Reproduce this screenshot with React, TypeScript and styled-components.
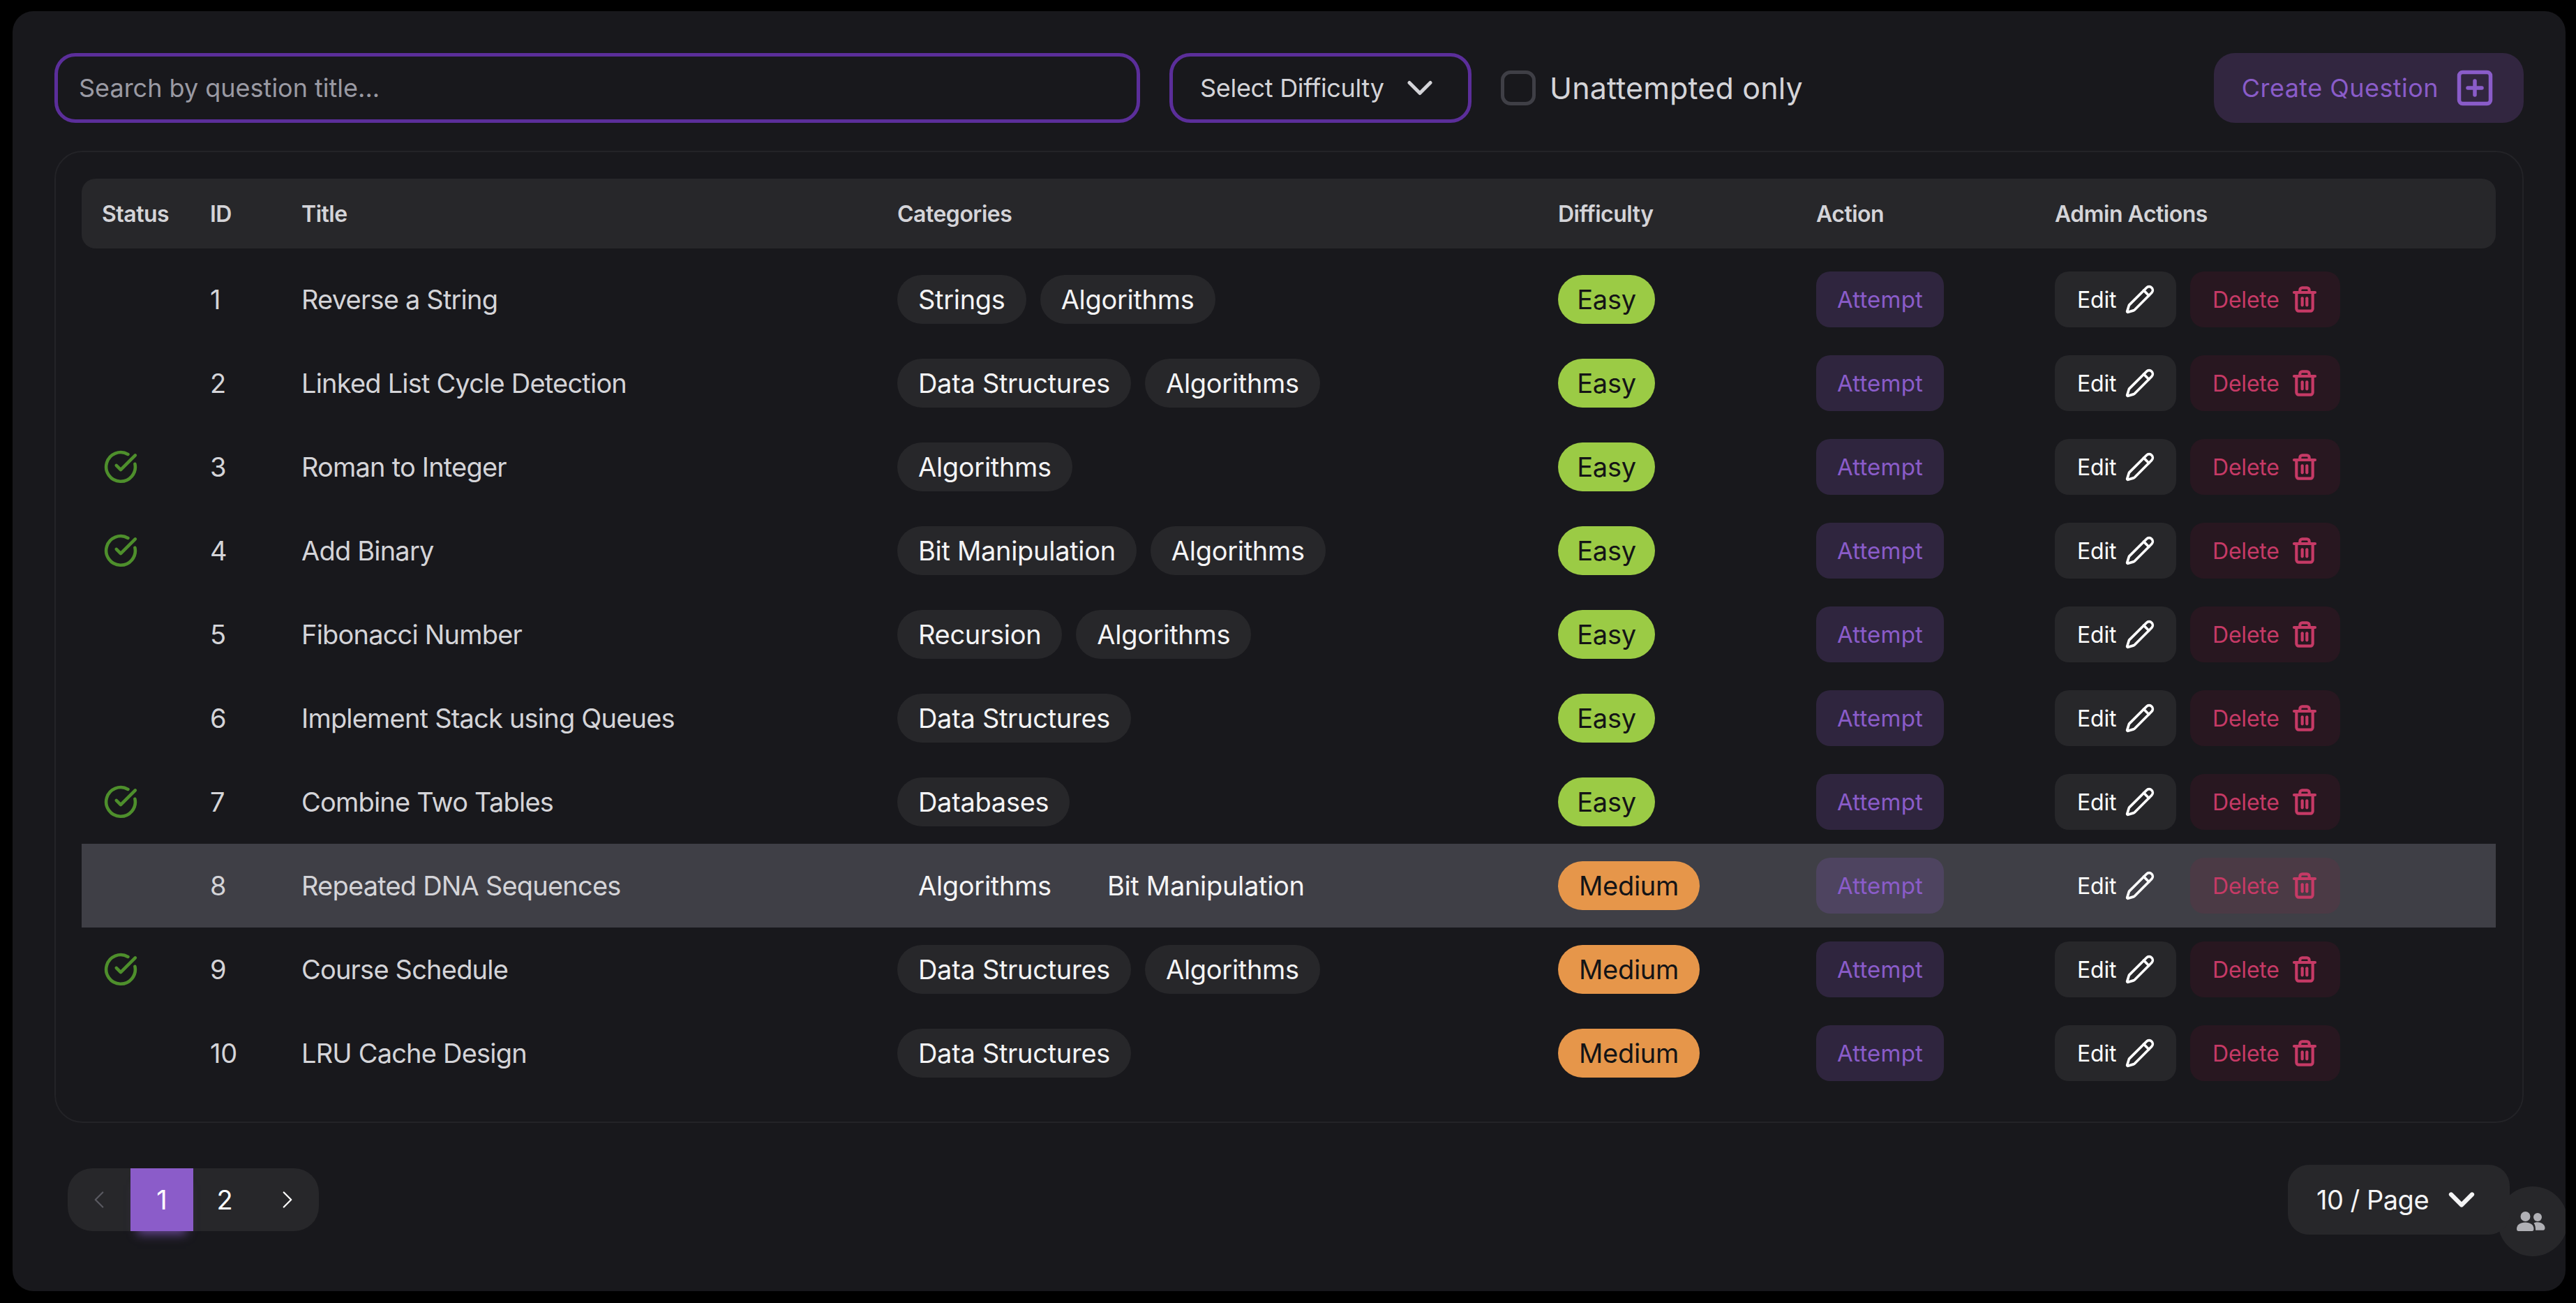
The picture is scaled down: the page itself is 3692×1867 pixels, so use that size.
import styled, { createGlobalStyle } from "styled-components";
import { ChevronDown, ChevronLeft, ChevronRight, CircleCheckBig, Pencil, SquarePlus, Trash2 } from "lucide-react";

const GlobalStyle = createGlobalStyle`
  html, body {
    margin: 0;
    padding: 0;
    background: #000;
    font-family: "Inter", "Noto Sans", sans-serif;
  }
  * { box-sizing: border-box; }
`;

const Page = styled.div`
  width: 3692px;
  height: 1867px;
  padding: 16px 15px 17px 18px;
`;

const Panel = styled.div`
  position: relative;
  height: 100%;
  padding: 60px 60px 0;
  background: #18181c;
  border-radius: 30px;
  overflow: hidden;
`;

const Toolbar = styled.div`
  display: flex;
  align-items: center;
  height: 100px;
`;

const SearchBox = styled.div`
  display: flex;
  align-items: center;
  width: 1556px;
  height: 100px;
  padding: 0 30px;
  border: 5px solid #5b2e9a;
  border-radius: 30px;
  font-size: 36px;
  letter-spacing: 0;
  color: #9a9aa3;
`;

const DifficultySelect = styled.div`
  display: flex;
  align-items: center;
  justify-content: space-between;
  width: 433px;
  height: 100px;
  margin-left: 42px;
  padding: 0 39px;
  border: 5px solid #5b2e9a;
  border-radius: 30px;
  font-size: 36px;
  letter-spacing: -0.3px;
  color: #d4d4d8;
`;

const CheckBox = styled.div`
  width: 50px;
  height: 50px;
  margin-left: 42px;
  border: 5px solid #3f3f46;
  border-radius: 14px;
`;

const CheckLabel = styled.div`
  margin-left: 20px;
  font-size: 43px;
  letter-spacing: 0.15px;
  color: #d4d4d8;
`;

const CreateButton = styled.div`
  display: flex;
  align-items: center;
  gap: 22px;
  height: 100px;
  margin-left: auto;
  padding: 0 40px;
  background: #322640;
  border-radius: 30px;
  font-size: 36px;
  letter-spacing: 0.45px;
  color: #8a5cc9;
`;

const TableCard = styled.div`
  height: 1393px;
  margin-top: 40px;
  padding: 38px 38px 38px 37px;
  border: 2px solid #232327;
  border-radius: 40px;
`;

const columns = "155px 131px 854px 947px 370px 342px 1fr";

const HeaderRow = styled.div`
  display: grid;
  grid-template-columns: ${columns};
  align-items: center;
  height: 100px;
  margin-bottom: 13px;
  padding-left: 29px;
  background: #27272a;
  border-radius: 20px;
  font-size: 32px;
  font-weight: 600;
  letter-spacing: -0.5px;
  color: #d4d4d8;
`;

const Row = styled.div<{ $hover?: boolean }>`
  display: grid;
  grid-template-columns: ${columns};
  align-items: center;
  height: 120px;
  padding-left: 29px;
  background: ${(p) => (p.$hover ? "#3f3f46" : "transparent")};
  font-size: 38px;
  letter-spacing: -0.3px;
  color: #d4d4d8;
`;

const StatusCell = styled.div`
  display: flex;
  align-items: center;
  padding-left: 2px;
  color: #4e8f2c;
`;

const TitleCell = styled.div`
  letter-spacing: -0.8px;
`;

const Chips = styled.div`
  display: flex;
  gap: 20px;
`;

const Chip = styled.div<{ $hover?: boolean }>`
  display: flex;
  align-items: center;
  height: 70px;
  padding: 0 30px;
  background: ${(p) => (p.$hover ? "transparent" : "#27272a")};
  border-radius: 35px;
  color: #f4f4f5;
`;

const DifficultyBadge = styled.div<{ $level: string }>`
  display: flex;
  align-items: center;
  justify-content: center;
  width: ${(p) => (p.$level === "Easy" ? "139px" : "203px")};
  height: 70px;
  background: ${(p) => (p.$level === "Easy" ? "#9bcb45" : "#e6964a")};
  border-radius: 35px;
  color: #141416;
`;

const AttemptButton = styled.div`
  display: flex;
  align-items: center;
  justify-content: center;
  width: 183px;
  height: 80px;
  background: rgba(138, 92, 201, 0.2);
  border-radius: 20px;
  font-size: 33px;
  letter-spacing: 0.2px;
  color: #8a5cc9;
`;

const AdminCell = styled.div`
  display: flex;
  gap: 20px;
`;

const EditButton = styled.div<{ $hover?: boolean }>`
  display: flex;
  align-items: center;
  justify-content: space-between;
  width: 174px;
  height: 80px;
  padding: 0 30px 0 32px;
  background: ${(p) => (p.$hover ? "transparent" : "#27272a")};
  border-radius: 20px;
  font-size: 32px;
  letter-spacing: -0.2px;
  color: #fff;
`;

const DeleteButton = styled.div`
  display: flex;
  align-items: center;
  justify-content: space-between;
  width: 215px;
  height: 80px;
  padding: 0 31px 0 32px;
  background: rgba(190, 24, 70, 0.1);
  border-radius: 20px;
  font-size: 32px;
  letter-spacing: -0.2px;
  color: #c63a66;
`;

const Footer = styled.div`
  display: flex;
  align-items: center;
  justify-content: space-between;
  margin-top: 60px;
  padding: 0 20px 0 19px;
`;

const Pagination = styled.div`
  display: flex;
  background: #27272a;
  border-radius: 35px;
`;

const PageCell = styled.div<{ $active?: boolean; $muted?: boolean }>`
  display: flex;
  align-items: center;
  justify-content: center;
  width: 90px;
  height: 90px;
  background: ${(p) => (p.$active ? "#8b5cc9" : "transparent")};
  box-shadow: ${(p) => (p.$active ? "0 14px 14px -10px rgba(139, 92, 201, 0.7)" : "none")};
  font-size: 38px;
  color: ${(p) => (p.$muted ? "#5a5a61" : "#fff")};
`;

const PageSize = styled.div`
  position: relative;
  z-index: 1;
  display: flex;
  align-items: center;
  justify-content: space-between;
  width: 318px;
  height: 100px;
  padding: 0 39px 0 41px;
  background: #27272a;
  border-radius: 30px;
  font-size: 38px;
  letter-spacing: -0.5px;
  color: #f4f4f5;
`;

const FloatButton = styled.div`
  position: absolute;
  left: 3562px;
  top: 1684px;
  display: flex;
  align-items: center;
  justify-content: center;
  width: 100px;
  height: 100px;
  padding-right: 6px;
  background: #27272a;
  border-radius: 50%;
  color: #b0b0b5;
`;

const PeopleIcon = () => (
  <svg width="41" height="28" viewBox="0 0 41 28" fill="currentColor">
    <circle cx="12.5" cy="7" r="7" />
    <path d="M0 25C0 19 5 15.5 12.3 15.5C19.5 15.5 24.5 19 24.5 25C24.5 27 23.5 28 22 28L2.5 28C1 28 0 27 0 25Z" />
    <circle cx="30" cy="8" r="6" />
    <path d="M24.5 16.5C26 15.7 28 15.3 30 15.3C36 15.3 40.5 19 40.5 23.5C40.5 25 39.5 26.7 38 26.7L27 26.7C27 22.5 26.5 19 24.5 16.5Z" />
  </svg>
);

const questions = [
  { id: 1, title: "Reverse a String", cats: ["Strings", "Algorithms"], level: "Easy" },
  { id: 2, title: "Linked List Cycle Detection", cats: ["Data Structures", "Algorithms"], level: "Easy" },
  { id: 3, title: "Roman to Integer", cats: ["Algorithms"], level: "Easy", done: true },
  { id: 4, title: "Add Binary", cats: ["Bit Manipulation", "Algorithms"], level: "Easy", done: true },
  { id: 5, title: "Fibonacci Number", cats: ["Recursion", "Algorithms"], level: "Easy" },
  { id: 6, title: "Implement Stack using Queues", cats: ["Data Structures"], level: "Easy" },
  { id: 7, title: "Combine Two Tables", cats: ["Databases"], level: "Easy", done: true },
  { id: 8, title: "Repeated DNA Sequences", cats: ["Algorithms", "Bit Manipulation"], level: "Medium", hover: true },
  { id: 9, title: "Course Schedule", cats: ["Data Structures", "Algorithms"], level: "Medium", done: true },
  { id: 10, title: "LRU Cache Design", cats: ["Data Structures"], level: "Medium" },
];

export default function App() {
  return (
    <Page>
      <GlobalStyle />
      <Panel>
        <Toolbar>
          <SearchBox>Search by question title...</SearchBox>
          <DifficultySelect>
            Select Difficulty
            <ChevronDown size={60} strokeWidth={2} />
          </DifficultySelect>
          <CheckBox />
          <CheckLabel>Unattempted only</CheckLabel>
          <CreateButton>
            Create Question
            <SquarePlus size={60} strokeWidth={2.2} />
          </CreateButton>
        </Toolbar>

        <TableCard>
          <HeaderRow>
            <div>Status</div>
            <div>ID</div>
            <div>Title</div>
            <div>Categories</div>
            <div>Difficulty</div>
            <div>Action</div>
            <div>Admin Actions</div>
          </HeaderRow>
          {questions.map((q) => (
            <Row key={q.id} $hover={q.hover}>
              <StatusCell>{q.done && <CircleCheckBig size={50} strokeWidth={2.2} />}</StatusCell>
              <div>{q.id}</div>
              <TitleCell>{q.title}</TitleCell>
              <Chips>
                {q.cats.map((c) => (
                  <Chip key={c} $hover={q.hover}>{c}</Chip>
                ))}
              </Chips>
              <div>
                <DifficultyBadge $level={q.level}>{q.level}</DifficultyBadge>
              </div>
              <AttemptButton>Attempt</AttemptButton>
              <AdminCell>
                <EditButton $hover={q.hover}>
                  Edit
                  <Pencil size={44} strokeWidth={2} />
                </EditButton>
                <DeleteButton>
                  Delete
                  <Trash2 size={40} strokeWidth={2.5} />
                </DeleteButton>
              </AdminCell>
            </Row>
          ))}
        </TableCard>

        <Footer>
          <Pagination>
            <PageCell $muted><ChevronLeft size={42} strokeWidth={1.3} /></PageCell>
            <PageCell $active>1</PageCell>
            <PageCell>2</PageCell>
            <PageCell><ChevronRight size={42} strokeWidth={1.3} /></PageCell>
          </Pagination>
          <PageSize>
            10 / Page
            <ChevronDown size={60} strokeWidth={2.5} />
          </PageSize>
        </Footer>

        <FloatButton>
          <PeopleIcon />
        </FloatButton>
      </Panel>
    </Page>
  );
}
